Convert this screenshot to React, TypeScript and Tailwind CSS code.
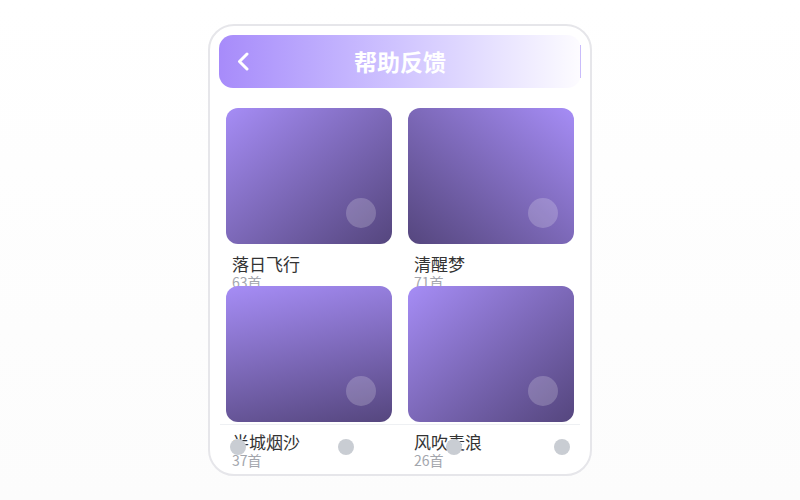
const albums = [
  { title: "落日飞行", count: "63首", bg: "bg-gradient-to-br from-[#a68df6] to-[#55467e]" },
  { title: "清醒梦", count: "71首", bg: "bg-gradient-to-bl from-[#a68df6] to-[#55467e]" },
  { title: "半城烟沙", count: "37首", bg: "bg-[linear-gradient(168deg,#a68df6,#55467e)]" },
  { title: "风吹麦浪", count: "26首", bg: "bg-gradient-to-br from-[#a68df6] to-[#55467e]" },
];

export default function App() {
  return (
    <div className="flex h-[500px] w-full items-center justify-center bg-gradient-to-b from-white to-[#fcfcfc] font-['Noto_Sans_CJK_SC','Noto_Sans',sans-serif]">
      <div className="relative h-[452px] w-[384px] overflow-hidden rounded-[26px] border-2 border-[#e6e6ea] bg-white">
        <header className="mx-[9px] mt-[9px] grid h-[53px] grid-cols-[1fr_auto_1fr] items-center rounded-[14px] bg-gradient-to-r from-[#a78bfa] to-[#fdfcff]">
          <svg width="14" height="19" viewBox="0 0 14 19" fill="none" className="ml-[17px] text-white">
            <polyline points="11,2 3.5,9.5 11,17" stroke="currentColor" strokeWidth="3" strokeLinecap="round" strokeLinejoin="round" />
          </svg>
          <h1 className="text-center text-[23px] font-bold leading-none text-white">帮助反馈</h1>
          <div className="h-[33px] w-px justify-self-end bg-[#c9bcfb]" />
        </header>

        <div className="mt-5 grid grid-cols-2 gap-x-4 px-4">
          {albums.map((album) => (
            <div key={album.title} className="h-[178px]">
              <div className={"relative h-[136px] rounded-[12px] " + album.bg}>
                <span className="absolute bottom-4 right-4 h-[30px] w-[30px] rounded-full bg-white/20" />
              </div>
              <div className="mt-[9px] pl-[6px]">
                <p className="text-[17px] leading-[21px] text-[#333333]">{album.title}</p>
                <p className="text-[14px] leading-[16px] text-[#a3a6ad]">{album.count}</p>
              </div>
            </div>
          ))}
        </div>

        <nav className="absolute left-[10px] right-[10px] top-[398px] flex h-[50px] items-start justify-between border-t border-[#eef0f3] px-[10px] pt-[14px]">
          <span className="h-4 w-4 rounded-full bg-[#c9cdd3]" />
          <span className="h-4 w-4 rounded-full bg-[#c9cdd3]" />
          <span className="h-4 w-4 rounded-full bg-[#c9cdd3]" />
          <span className="h-4 w-4 rounded-full bg-[#c9cdd3]" />
        </nav>
      </div>
    </div>
  );
}
